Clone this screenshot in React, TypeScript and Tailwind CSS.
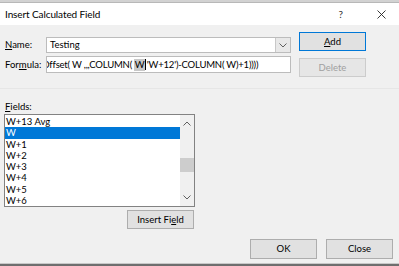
import React from "react";

const font = { fontFamily: 'Lato, "Noto Sans", sans-serif' };

function Chevron({ up = false, className = "" }: { up?: boolean; className?: string }) {
  return (
    <svg width="8" height="5" viewBox="0 0 8 5" className={className}>
      <polyline
        points={up ? "0.5,4.5 4,1 7.5,4.5" : "0.5,0.5 4,4 7.5,0.5"}
        fill="none"
        stroke="#606060"
        strokeWidth="1"
      />
    </svg>
  );
}

export default function App() {
  const items = ["W+13 Avg", "W", "W+1", "W+2", "W+3", "W+4", "W+5", "W+6"];
  return (
    <div
      className="w-[399px] h-[266px] bg-[#f0f0f0] flex flex-col overflow-hidden text-[9.5px] text-black leading-[12px]"
      style={font}
    >
      <div className="h-[3px] bg-[#d2d2d2] border-b border-[#b8b8b8]" />
      <div className="h-[22px] bg-white flex items-center pl-[5px] text-[10px] tracking-[-0.1px]">
        <span>Insert Calculated Field</span>
        <span className="ml-auto mr-[34px] text-[10px] text-[#333]">?</span>
        <svg width="9" height="9" viewBox="0 0 9 9" className="mr-[13px]">
          <path d="M0.5 0.5 L8.5 8.5 M8.5 0.5 L0.5 8.5" stroke="#222" strokeWidth="0.9" fill="none" />
        </svg>
      </div>
      <div className="flex-1 flex flex-col">
        <div className="flex pl-[5px]">
          <div className="flex flex-col pt-[12px] gap-[3px]">
            <div className="flex items-center h-[16px]">
              <span className="w-[41px] whitespace-nowrap">
                <span className="underline underline-offset-1">N</span>ame:
              </span>
              <div className="w-[245px] h-[16px] bg-white border border-[#bcbcbc] flex items-center">
                <span className="pl-[3px] flex-1">Testing</span>
                <div className="w-[15px] h-full bg-[#e8e8e8] border-l border-[#c8c8c8] flex items-center justify-center">
                  <Chevron />
                </div>
              </div>
            </div>
            <div className="flex items-center h-[17px]">
              <span className="w-[41px] whitespace-nowrap">
                For<span className="underline underline-offset-1">m</span>ula:
              </span>
              <div className="w-[245px] h-[17px] bg-white border border-[#bcbcbc] flex items-center overflow-hidden whitespace-nowrap">
                <span className="ml-[-5px] flex items-center tracking-[-0.2px]">
                  Offset( W ,,,COLUMN(&nbsp;
                  <span className="bg-[#c8c8c8] px-[0.5px]">W</span>
                  <span className="w-[1px] h-[11px] bg-black mr-[1px]" />
                  'W+12')-COLUMN( W)+1))))
                </span>
              </div>
            </div>
          </div>
          <div className="flex flex-col pt-[7px] gap-[7px] ml-[8px]">
            <div className="w-[67px] h-[19px] bg-[#e1e1e1] border border-[#0078d7] flex items-center justify-center">
              <span>
                <span className="underline underline-offset-1">A</span>dd
              </span>
            </div>
            <div className="w-[67px] h-[19px] bg-[#e6e6e6] border border-[#cccccc] flex items-center justify-center text-[#a0a0a0]">
              Delete
            </div>
          </div>
        </div>
        <div className="mt-[11px] h-px bg-[#e6e6e6]" />
        <div className="pl-[5px] mt-[12px] h-[12px] flex items-center">
          <span>
            <span className="underline underline-offset-1">F</span>ields:
          </span>
        </div>
        <div className="ml-[4px] mt-[1px] w-[191px] h-[93px] bg-white border border-[#828282] flex">
          <div className="flex-1 flex flex-col pt-[1px]">
            {items.map((it, i) => (
              <div
                key={it}
                className={
                  "h-[11.4px] leading-[11px] flex items-center pl-[1px] " +
                  (i === 1 ? "bg-[#0078d7] text-white" : "")
                }
              >
                {it}
              </div>
            ))}
          </div>
          <div className="w-[14px] bg-[#f0f0f0] flex flex-col items-center">
            <div className="h-[17px] flex items-center justify-center">
              <Chevron up />
            </div>
            <div className="mt-[26px] w-[14px] h-[14px] bg-[#cdcdcd]" />
            <div className="flex-1" />
            <div className="h-[17px] flex items-center justify-center">
              <Chevron />
            </div>
          </div>
        </div>
        <div className="flex pl-[127px] mt-[3px]">
          <div className="w-[67px] h-[19px] bg-[#e1e1e1] border border-[#adadad] flex items-center justify-center">
            <span>
              Insert Fi<span className="underline underline-offset-1">e</span>ld
            </span>
          </div>
        </div>
        <div className="flex justify-end gap-[9px] pr-[6px] mt-[10px]">
          <div className="w-[67px] h-[20px] bg-[#e1e1e1] border border-[#adadad] flex items-center justify-center">
            OK
          </div>
          <div className="w-[67px] h-[20px] bg-[#e1e1e1] border border-[#adadad] flex items-center justify-center">
            Close
          </div>
        </div>
        <div className="flex-1" />
      </div>
      <div className="h-px bg-[#c8c8c8]" />
      <div className="h-[2px] bg-[#6e6e6e]" />
    </div>
  );
}
